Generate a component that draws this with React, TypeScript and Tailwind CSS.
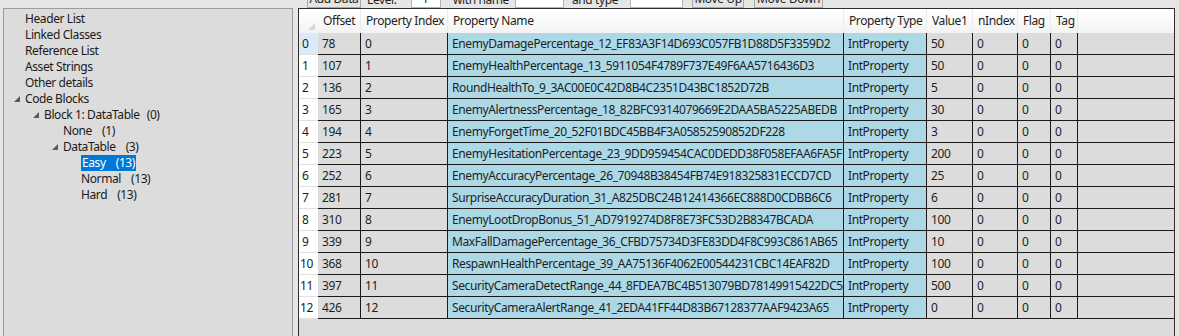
import React from "react";

// rows of the DataTable "Easy"
const rows = [
    { offset: 78, name: "EnemyDamagePercentage_12_EF83A3F14D693C057FB1D88D5F3359D2", value: 50 },
    { offset: 107, name: "EnemyHealthPercentage_13_5911054F4789F737E49F6AA5716436D3", value: 50 },
    { offset: 136, name: "RoundHealthTo_9_3AC00E0C42D8B4C2351D43BC1852D72B", value: 5 },
    { offset: 165, name: "EnemyAlertnessPercentage_18_82BFC9314079669E2DAA5BA5225ABEDB", value: 30 },
    { offset: 194, name: "EnemyForgetTime_20_52F01BDC45BB4F3A05852590852DF228", value: 3 },
    { offset: 223, name: "EnemyHesitationPercentage_23_9DD959454CAC0DEDD38F058EFAA6FA5F", value: 200 },
    { offset: 252, name: "EnemyAccuracyPercentage_26_70948B38454FB74E918325831ECCD7CD", value: 25 },
    { offset: 281, name: "SurpriseAccuracyDuration_31_A825DBC24B12414366EC888D0CDBB6C6", value: 6 },
    { offset: 310, name: "EnemyLootDropBonus_51_AD7919274D8F8E73FC53D2B8347BCADA", value: 100 },
    { offset: 339, name: "MaxFallDamagePercentage_36_CFBD75734D3FE83DD4F8C993C861AB65", value: 10 },
    { offset: 368, name: "RespawnHealthPercentage_39_AA75136F4062E00544231CBC14EAF82D", value: 100 },
    { offset: 397, name: "SecurityCameraDetectRange_44_8FDEA7BC4B513079BD78149915422DC5", value: 500 },
    { offset: 426, name: "SecurityCameraAlertRange_41_2EDA41FF44D83B67128377AAF9423A65", value: 0 },
];

const columns = [
    { label: "Offset", w: "w-[43px]" },
    { label: "Property Index", w: "w-[87px]" },
    { label: "Property Name", w: "w-[396px]" },
    { label: "Property Type", w: "w-[83px]" },
    { label: "Value1", w: "w-[46px]" },
    { label: "nIndex", w: "w-[45px]" },
    { label: "Flag", w: "w-[33px]" },
    { label: "Tag", w: "w-[27px]" },
];

const tree = [
    { label: "Header List", depth: 0 },
    { label: "Linked Classes", depth: 0 },
    { label: "Reference List", depth: 0 },
    { label: "Asset Strings", depth: 0 },
    { label: "Other details", depth: 0 },
    { label: "Code Blocks", depth: 0, open: true },
    { label: "Block 1: DataTable", count: "(0)", gap: "ml-[7px]", depth: 1, open: true },
    { label: "None", count: "(1)", depth: 2 },
    { label: "DataTable", count: "(3)", depth: 2, open: true },
    { label: "Easy", count: "(13)", depth: 3, selected: true },
    { label: "Normal", count: "(13)", depth: 3 },
    { label: "Hard", count: "(13)", depth: 3 },
];

// panel content starts at x=4, so these land the text at 25/44/63/82
const indent = ["pl-[21px]", "pl-[40px]", "pl-[59px]", "pl-[77px]"];

function Expander() {
    return (
        <svg width="6" height="6" viewBox="0 0 6 6" className="absolute left-[-11px] top-[5px]">
            <path d="M6 0 L6 6 L0 6 Z" fill="#5a5a5a" />
        </svg>
    );
}

function Toolbar() {
    return (
        <div className="h-[8px] overflow-hidden flex items-end pl-[307px] text-[#1e1e1e] shrink-0">
            <div className="h-[22px] w-[54px] border border-[#a8a8a8] bg-[#e4e4e4] flex items-end justify-center leading-[16px]">Add Data</div>
            <div className="h-[22px] w-[50px] flex items-end pl-[6px] leading-[16px]">Level:</div>
            <div className="h-[22px] w-[30px] border border-[#b4b4b4] bg-white flex items-end pl-[10px] leading-[16px]">1</div>
            <div className="h-[22px] w-[74px] flex items-end pl-[12px] leading-[16px]">with name</div>
            <div className="h-[22px] w-[49px] border border-[#b4b4b4] bg-white" />
            <div className="h-[22px] w-[66px] flex items-end pl-[8px] leading-[16px]">and type</div>
            <div className="h-[22px] w-[53px] border border-[#b4b4b4] bg-white" />
            <div className="h-[22px] w-[52px] ml-[9px] border border-[#a8a8a8] bg-[#e4e4e4] flex items-end justify-center leading-[16px]">Move Up</div>
            <div className="h-[22px] w-[69px] ml-[10px] border border-[#a8a8a8] bg-[#e4e4e4] flex items-end justify-center leading-[16px]">Move Down</div>
        </div>
    );
}

function TreePanel() {
    return (
        <div className="ml-[3px] w-[290px] border-l border-t border-r border-[#9c9c9c] bg-[#dcdcdc] pt-[2px] text-[#1a1a1a]">
            {tree.map((n) => (
                <div key={n.label} className={`h-[16px] leading-[16px] ${indent[n.depth]}`}>
                    <span className="relative inline-flex">
                        {n.open && <Expander />}
                        <span className={`inline-flex pr-[1px] ${n.selected ? "bg-[#0078d7] text-white" : ""}`}>
                            <span className={n.selected ? "pl-[1px]" : ""}>{n.label}</span>
                            {n.count && <span className={n.gap ?? "ml-[10px]"}>{n.count}</span>}
                        </span>
                    </span>
                </div>
            ))}
        </div>
    );
}

function DataGrid() {
    return (
        <div className="flex-1 mr-[4px] border-l border-t border-r border-[#2e2e2e] bg-[#dcdcdc] text-[#1e1e1e] flex flex-col">
            {/* header */}
            <div className="h-[24px] flex bg-gradient-to-b from-white to-[#f3f3f3]">
                <div className="w-[19px] relative shrink-0">
                    <svg width="7" height="7" viewBox="0 0 7 7" className="absolute right-[3px] bottom-[3px]">
                        <path d="M7 0 L7 7 L0 7 Z" fill="#d6d6d6" />
                    </svg>
                </div>
                {columns.map((c) => (
                    <div key={c.label} className={`${c.w} shrink-0 pl-[5px] flex items-center whitespace-nowrap border-r border-[#ececec]`}>
                        {c.label}
                    </div>
                ))}
                <div className="flex-1" />
            </div>
            {/* rows */}
            {rows.map((r, i) => (
                <div key={r.offset} className="h-[22px] flex">
                    <div
                        className={`w-[19px] shrink-0 border-b border-[#e2e2e2] flex items-center whitespace-nowrap ${
                            i === 0 ? "bg-[#d9ebf9]" : "bg-white"
                        } ${i > 9 ? "pl-[1px]" : "pl-[3px]"}`}
                    >
                        {i}
                    </div>
                    <div className="flex-1 flex border-b border-[#1a1a1a]">
                        {[r.offset, i, r.name, "IntProperty", r.value, 0, 0, 0].map((v, j) => (
                            <div
                                key={j}
                                className={`${columns[j].w} shrink-0 pl-[4px] flex items-center whitespace-nowrap overflow-hidden border-r border-[#1a1a1a] ${
                                    j === 2 || j === 3 ? "bg-[#add8e6]" : ""
                                }`}
                            >
                                {v}
                            </div>
                        ))}
                        <div className="flex-1" />
                    </div>
                </div>
            ))}
            <div className="flex-1" />
        </div>
    );
}

export default function App() {
    return (
        <div className="w-[1179px] h-[336px] overflow-hidden bg-[#e6e6e6] flex flex-col text-[12px] tracking-[-0.4px] font-['Segoe_UI','Noto_Sans',sans-serif]">
            <Toolbar />
            <div className="flex flex-1">
                <TreePanel />
                <div className="w-[5px] shrink-0" />
                <DataGrid />
            </div>
        </div>
    );
}
